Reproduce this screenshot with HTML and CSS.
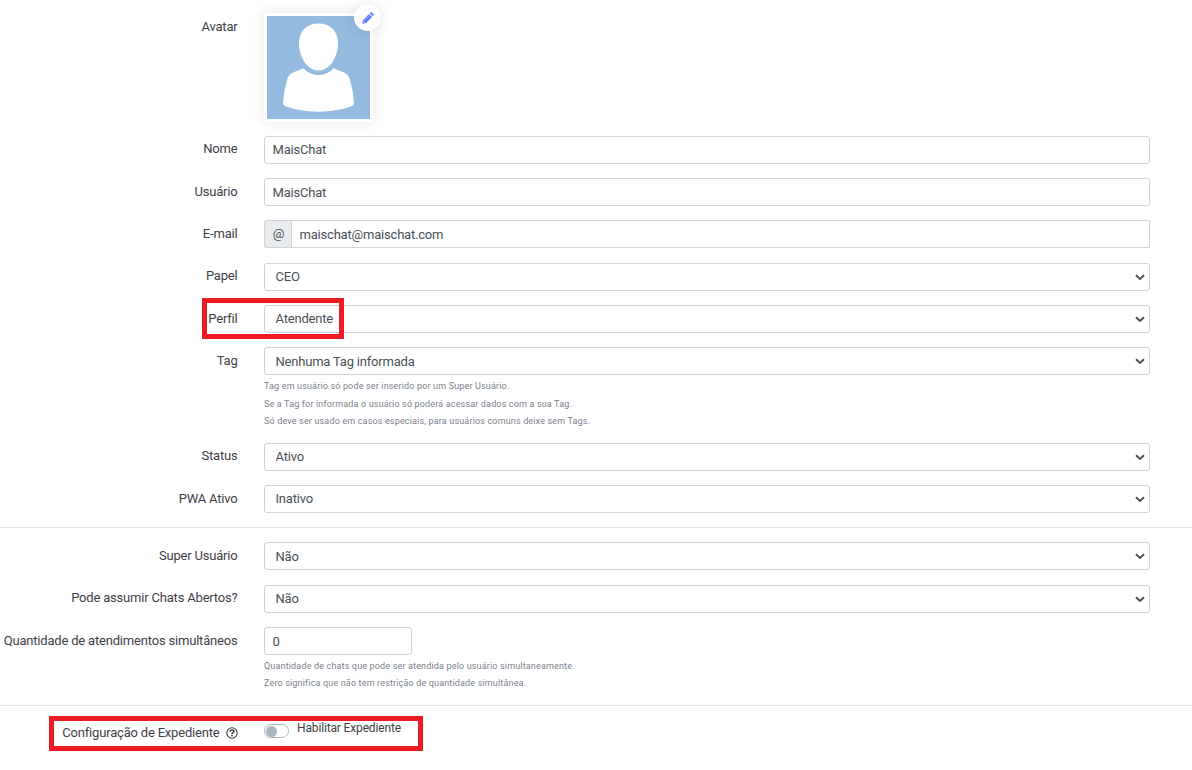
FILE: index.html
```html
<!DOCTYPE html>
<html lang="pt-BR">
<head>
<meta charset="utf-8">
<title>Usuário</title>
<link rel="stylesheet" href="styles.css">
</head>
<body>
<form class="form">
  <div class="row row-avatar">
    <label class="label">Avatar</label>
    <div class="avatar">
      <svg class="avatar-picture" viewBox="0 0 103 103">
        <rect width="103" height="103" fill="#95badf"/>
        <path fill="#fff" d="M51.500 7.500C63 7.500 71 15 71 27C71 42 62 54.500 51.500 54.500C41 54.500 32 42 32 27C32 15 40 7.500 51.500 7.500Z"/>
        <path fill="#fff" d="M36.500 52.300C44 61.300 59 61.300 66.500 52.300L77 56.500C80 58 82 60 83 64Q86.500 76 87 87Q87 89 85 90C66 97.500 37 97.500 18 90Q16 89 16 87Q16.500 76 20 64C21 60 23 58 26 56.500Z"/>
      </svg>
      <button class="avatar-edit" type="button" aria-label="Editar">
        <svg width="12" height="12" viewBox="0 0 12 12"><path fill="#5d78ff" d="M.3 11.700L1.100 7.900L7 2L10 5L4.100 10.900ZM7.700 1.300L8.600.5Q9.300 0 10 .5L11.500 2Q12 2.700 11.500 3.400L10.700 4.300Z"/><path d="M2.800 8L7.200 3.600" stroke="#dfe5ff" stroke-width=".6"/><path d="M1.700 9L3 10.300" stroke="#fff" stroke-width=".8"/></svg>
      </button>
    </div>
  </div>
  <div class="row"><label class="label">Nome</label><input class="control" value="MaisChat"></div>
  <div class="row"><label class="label">Usuário</label><input class="control" value="MaisChat"></div>
  <div class="row"><label class="label">E-mail</label><div class="group"><span class="addon">@</span><input class="control control-grouped" value="maischat@maischat.com"></div></div>
  <div class="row"><label class="label">Papel</label><select class="control"><option>CEO</option></select></div>
  <div class="row"><label class="label">Perfil</label><select class="control"><option>Atendente</option></select><span class="mark mark-profile"></span></div>
  <div class="row"><label class="label">Tag</label>
    <div class="field"><select class="control"><option>Nenhuma Tag informada</option></select>
      <div class="help">Tag em usuário só pode ser inserido por um Super Usuário.<br>Se a Tag for informada o usuário só poderá acessar dados com a sua Tag.<br>Só deve ser usado em casos especiais, para usuários comuns deixe sem Tags.</div>
    </div>
  </div>
  <div class="row"><label class="label">Status</label><select class="control"><option>Ativo</option></select></div>
  <div class="row"><label class="label">PWA Ativo</label><select class="control"><option>Inativo</option></select></div>
  <hr class="divider">
  <div class="row"><label class="label">Super Usuário</label><select class="control"><option>Não</option></select></div>
  <div class="row"><label class="label">Pode assumir Chats Abertos?</label><select class="control"><option>Não</option></select></div>
  <div class="row"><label class="label">Quantidade de atendimentos simultâneos</label>
    <div class="field"><input class="control control-short" value="0">
      <div class="help">Quantidade de chats que pode ser atendida pelo usuário simultaneamente.<br>Zero significa que não tem restrição de quantidade simultânea.</div>
    </div>
  </div>
  <hr class="divider">
  <div class="row row-schedule">
    <div class="label label-schedule"><span>Configuração de Expediente</span>
      <svg width="12" height="12" viewBox="0 0 12 12" fill="none"><circle cx="6" cy="6" r="5.200" stroke="#3f4047" stroke-width="1.100"/><path d="M4 4.700Q4.300 3 6 3Q7.900 3 7.900 4.500Q7.900 5.300 6.800 5.800Q6 6.200 6 7" stroke="#3f4047" stroke-width="1.500"/><circle cx="6" cy="8.600" r=".9" fill="#3f4047"/></svg>
    </div>
    <label class="toggle"><span class="switch"></span><span class="toggle-text">Habilitar Expediente</span></label>
    <span class="mark mark-schedule"></span>
  </div>
</form>
</body>
</html>
```
FILE: styles.css
```css
* { box-sizing: border-box; }
body {
  margin: 0;
  background: #fff;
  color: #3f4047;
  font: 13px/20px Roboto, sans-serif;
  letter-spacing: -.19px;
  overflow: hidden;
}
.form { height: 770px; padding-top: 13px; }
.row {
  position: relative;
  display: grid;
  grid-template-columns: 237.5px 886px;
  column-gap: 26.5px;
  align-items: start;
  margin-bottom: 14.3px;
}
.label { padding-top: 3.7px; text-align: right; white-space: nowrap; }
.row-avatar { height: 108.5px; }
.row-avatar .label { padding-top: 4px; }
.avatar {
  position: relative;
  width: 109px;
  height: 109px;
  border: 3px solid #fff;
  border-radius: 3px;
  box-shadow: 0 0 13px rgba(0, 0, 0, .1);
}
.avatar-picture { display: block; width: 103px; height: 103px; }
.avatar-edit {
  position: absolute;
  top: -12px;
  right: -11px;
  width: 27px;
  height: 27px;
  padding: 0;
  display: flex;
  align-items: center;
  justify-content: center;
  border: 0;
  border-radius: 50%;
  background: #fff;
  box-shadow: 0 0 13px rgba(0, 0, 0, .1);
}
.control {
  display: block;
  width: 100%;
  height: 28px;
  margin: 0;
  padding: 0 7.500px;
  border: 1px solid #ced4da;
  border-radius: 3px;
  background: #fff;
  color: #495057;
  font: 13px Roboto, sans-serif;
  letter-spacing: -.2px;
}
select.control {
  appearance: none;
  padding: 0 10.500px;
  background: #fff url("data:image/svg+xml,%3Csvg xmlns='http://www.w3.org/2000/svg' width='10' height='7' viewBox='0 0 10 7'%3E%3Cpath d='M1 1.300L5 5L9 1.300' fill='none' stroke='%23495057' stroke-width='2'/%3E%3C/svg%3E") no-repeat right 4px top 10px;
}
.control-short { width: 148px; }
.group { display: flex; }
.addon {
  flex: none;
  width: 28px;
  height: 28px;
  border: 1px solid #ced4da;
  border-right: 0;
  border-radius: 3px 0 0 3px;
  background: #e9ecef;
  color: #495057;
  line-height: 26px;
  text-align: center;
}
.control-grouped { flex: 1; border-radius: 0; margin-left: -1px; }
.help {
  margin-top: 2.8px;
  margin-bottom: -2.2px;
  color: #7b7f8c;
  font-size: 9px;
  letter-spacing: .16px;
  line-height: 17.500px;
}
.divider { height: 1px; margin: 0 0 14.2px; border: 0; background: #e4e5e7; }
.mark { position: absolute; border: 5px solid #ed1c24; pointer-events: none; }
.mark-profile { left: 202px; top: -7px; width: 142px; height: 41px; }
.mark-schedule { left: 49px; top: -4px; width: 374px; height: 35px; }
.label-schedule {
  padding-top: 3px;
  display: flex;
  align-items: center;
  justify-content: flex-end;
  gap: 6px;
}
.toggle { display: flex; gap: 8px; margin-top: -2px; }
.toggle-text { font-size: 12px; letter-spacing: -.15px; }
.switch {
  width: 25px;
  height: 14px;
  margin-top: 6px;
  padding: .5px;
  border: 1px solid #adb5bd;
  border-radius: 7px;
}
.switch::before {
  content: "";
  display: block;
  width: 11px;
  height: 11px;
  border-radius: 50%;
  background: #adb5bd;
}
```
